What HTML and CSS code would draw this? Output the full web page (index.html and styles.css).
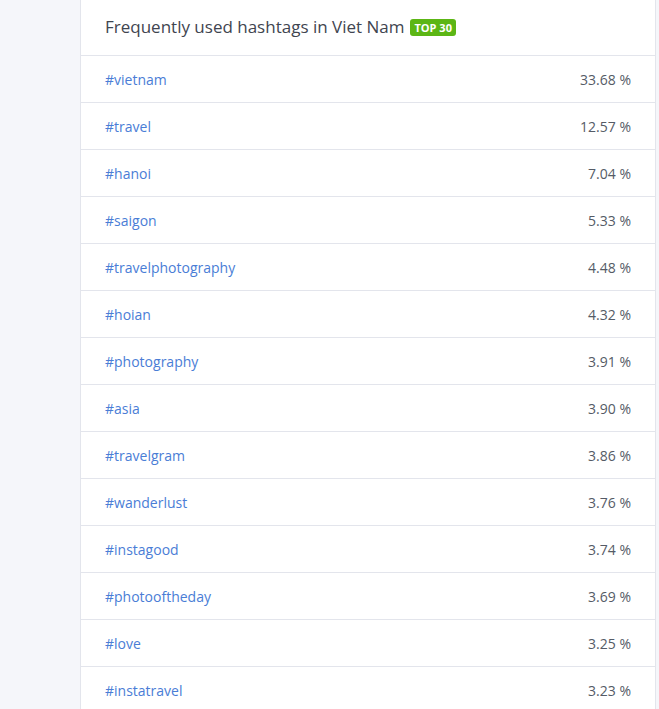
FILE: index.html
```html
<!DOCTYPE html>
<html lang="en">
<head>
    <meta charset="UTF-8">
    <meta name="viewport" content="width=device-width, initial-scale=1.0">
    <title>Hashtags - Viet Nam</title>
    <link rel="stylesheet" href="styles.css">
</head>
<body>
    <div class="page">
        <div class="card">
            <!-- Card header -->
            <div class="card-header">
                <h2>Frequently used hashtags in Viet Nam</h2>
                <span class="badge">TOP 30</span>
            </div>

            <!-- Hashtag list -->
            <ul class="tag-list">
                <li><a href="#">#vietnam</a><span class="pct">33.68 %</span></li>
                <li><a href="#">#travel</a><span class="pct">12.57 %</span></li>
                <li><a href="#">#hanoi</a><span class="pct">7.04 %</span></li>
                <li><a href="#">#saigon</a><span class="pct">5.33 %</span></li>
                <li><a href="#">#travelphotography</a><span class="pct">4.48 %</span></li>
                <li><a href="#">#hoian</a><span class="pct">4.32 %</span></li>
                <li><a href="#">#photography</a><span class="pct">3.91 %</span></li>
                <li><a href="#">#asia</a><span class="pct">3.90 %</span></li>
                <li><a href="#">#travelgram</a><span class="pct">3.86 %</span></li>
                <li><a href="#">#wanderlust</a><span class="pct">3.76 %</span></li>
                <li><a href="#">#instagood</a><span class="pct">3.74 %</span></li>
                <li><a href="#">#photooftheday</a><span class="pct">3.69 %</span></li>
                <li><a href="#">#love</a><span class="pct">3.25 %</span></li>
                <li><a href="#">#instatravel</a><span class="pct">3.23 %</span></li>
            </ul>
        </div>
    </div>
</body>
</html>
```

FILE: styles.css
```css
body {
    font-family: 'Open Sans', 'Noto Sans', sans-serif;
    background-color: #f5f6fa;
    margin: 0;
    padding: 0;
}

.page {
    padding-left: 80px;
    padding-right: 3px;
}

.card {
    background-color: #fff;
    border: 1px solid #e3e5ec;
    border-top: none;
}

.card-header {
    display: flex;
    align-items: center;
    height: 55px;
    padding: 0 24px;
    border-bottom: 1px solid #e3e5ec;
}

.card-header h2 {
    margin: 0 0 2px;
    font-size: 17px;
    font-weight: 400;
    color: #3f4550;
}

.badge {
    margin-left: 6px;
    padding: 1px 4px;
    background-color: #5cb615;
    color: white;
    font-size: 11px;
    font-weight: 700;
    line-height: 15px;
    border-radius: 3px;
}

.tag-list {
    list-style: none;
    margin: 0;
    padding: 0;
}

.tag-list li {
    display: flex;
    justify-content: space-between;
    align-items: center;
    height: 46px;
    padding: 0 24px;
    border-bottom: 1px solid #e3e5ec;
    font-size: 14px;
}

.tag-list a {
    color: #4a7dd6;
    text-decoration: none;
}

.tag-list .pct {
    color: #555b66;
}
```
